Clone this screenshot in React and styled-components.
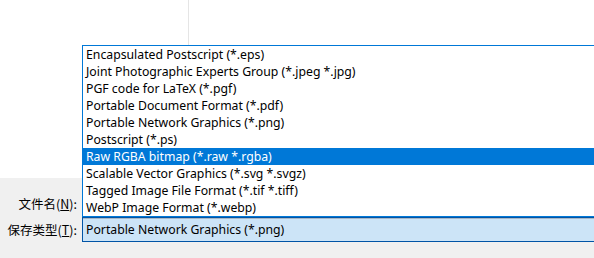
import React from "react";
import styled, { createGlobalStyle } from "styled-components";

const Global = createGlobalStyle`
  html, body { margin: 0; padding: 0; }
  body {
    font-family: "Noto Sans", "Noto Sans CJK SC", sans-serif;
    font-size: 12.25px;
    color: #000;
    overflow: hidden;
  }
`;

const Screen = styled.div`
  position: relative;
  width: 594px;
  height: 258px;
  display: flex;
  flex-direction: column;
  background: #f0f0f0;
  overflow: hidden;
`;

const FileArea = styled.div`
  height: 178px;
  background: #fff;
  display: flex;
`;

const Column = styled.div`
  width: ${(p) => p.$w}px;
  border-right: 1px solid #e5e5e5;
`;

const Panel = styled.div`
  display: flex;
  flex-direction: column;
  padding-top: 14px;
  gap: 1px;
`;

const Row = styled.div`
  display: flex;
  align-items: center;
  height: ${(p) => p.$h}px;
`;

const Label = styled.label`
  width: 77px;
  text-align: right;
  padding-right: 5px;
  white-space: nowrap;
  font-family: "Noto Sans CJK SC", sans-serif;
  font-size: 12.5px;
  line-height: 16px;
`;

const Key = styled.span`
  text-decoration: underline;
  text-underline-offset: 1px;
`;

const Combo = styled.div`
  flex: 1;
  height: 25px;
  box-sizing: border-box;
  border: 1px solid #0054a6;
  border-right: none;
  box-shadow: inset 0 1px 0 #a8b8c8;
  background: #cce4f7;
  display: flex;
  align-items: center;
  padding-left: 3px;
  white-space: nowrap;
`;

const List = styled.ul`
  position: absolute;
  top: 45px;
  left: 82px;
  width: 520px;
  margin: 0;
  padding: 0;
  list-style: none;
  background: #fff;
  border: 1px solid #0078d7;
  z-index: 2;
`;

const Item = styled.li`
  height: 17px;
  line-height: 17px;
  padding-left: 3px;
  white-space: nowrap;
  background: ${(p) => (p.$selected ? "#0078d7" : "transparent")};
  color: ${(p) => (p.$selected ? "#fff" : "#000")};
`;

const formats = [
  "Encapsulated Postscript (*.eps)",
  "Joint Photographic Experts Group (*.jpeg *.jpg)",
  "PGF code for LaTeX (*.pgf)",
  "Portable Document Format (*.pdf)",
  "Portable Network Graphics (*.png)",
  "Postscript (*.ps)",
  "Raw RGBA bitmap (*.raw *.rgba)",
  "Scalable Vector Graphics (*.svg *.svgz)",
  "Tagged Image File Format (*.tif *.tiff)",
  "WebP Image Format (*.webp)",
];

export default function App() {
  return (
    <>
      <Global />
      <Screen>
        <FileArea>
          <Column $w={188} />
        </FileArea>
        <Panel>
          <Row $h={24}>
            <Label>
              文件名(<Key>N</Key>):
            </Label>
          </Row>
          <Row $h={25}>
            <Label>
              保存类型(<Key>T</Key>):
            </Label>
            <Combo>Portable Network Graphics (*.png)</Combo>
          </Row>
        </Panel>
        <List>
          {formats.map((f, i) => (
            <Item key={f} $selected={i === 6}>
              {f}
            </Item>
          ))}
        </List>
      </Screen>
    </>
  );
}
